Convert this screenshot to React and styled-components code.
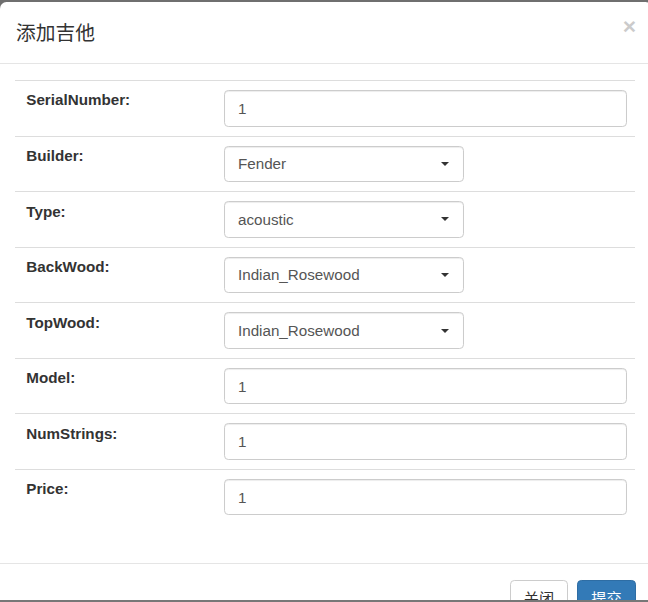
import React from "react";
import styled, { createGlobalStyle } from "styled-components";

const Global = createGlobalStyle`
  html, body { margin: 0; padding: 0; background: #6f6f6f; }
  body { font-family: "Liberation Sans", Arial, "Noto Sans CJK SC", sans-serif; color: #333; }
  * { box-sizing: border-box; }
`;

const Page = styled.div`
  width: 648px;
  height: 602px;
  display: flex;
  flex-direction: column;
  overflow: hidden;
  background: #6f6f6f;
`;

const Bar = styled.div`
  height: 2px;
  flex: none;
  background: ${(p) => p.$color || "#6f6f6f"};
`;

const Viewport = styled.div`
  flex: 1;
  overflow: hidden;
`;

const Modal = styled.div`
  width: 652px;
  background: #fff;
  border-radius: 6.5px 6.5px 0 0;
  display: flex;
  flex-direction: column;
`;

const Header = styled.div`
  display: flex;
  justify-content: space-between;
  align-items: flex-start;
  padding: 16.35px 16px 16.35px 16px;
  border-bottom: 1px solid #e5e5e5;
`;

const Title = styled.h4`
  margin: 0;
  font-family: "Noto Sans CJK SC", "Liberation Sans", sans-serif;
  font-weight: 400;
  font-size: 19.8px;
  line-height: 28.3px;
  color: #333;
`;

const Close = styled.button`
  border: 0;
  background: transparent;
  padding: 0;
  margin-top: -3px;
  font-family: "Liberation Sans", Arial, sans-serif;
  font-size: 22.9px;
  font-weight: 700;
  line-height: 1;
  color: #000;
  opacity: 0.2;
  text-shadow: 0 1px 0 #fff;
`;

const Body = styled.div`
  padding: 16px 16.7px 16.35px 15.3px;
`;

const Table = styled.div`
  display: flex;
  flex-direction: column;
  margin-bottom: 21.8px;
`;

const Row = styled.div`
  display: grid;
  grid-template-columns: 200px 1fr;
  border-top: 1px solid #ddd;
`;

const LabelCell = styled.div`
  padding: 8.5px 8.7px 0 11px;
  font-weight: 700;
  font-size: 15.2px;
  line-height: 21.8px;
  color: #333;
`;

const FieldCell = styled.div`
  padding: 9px 8.5px 9px 8.7px;
`;

const Input = styled.div`
  height: 36.57px;
  width: ${(p) => (p.$narrow ? "240px" : "100%")};
  border: 1px solid #ccc;
  border-radius: 4.3px;
  box-shadow: inset 0 1px 1px rgba(0, 0, 0, 0.075);
  padding: 0 13px;
  display: flex;
  align-items: center;
  justify-content: space-between;
  font-size: 15.2px;
  color: #555;
  background: #fff;
`;

const Caret = styled.span`
  width: 0;
  height: 0;
  border-left: 4.5px solid transparent;
  border-right: 4.5px solid transparent;
  border-top: 4.5px solid #333;
  margin-right: 1px;
`;

const Footer = styled.div`
  display: flex;
  justify-content: flex-end;
  gap: 9px;
  padding: 16.35px 16.4px;
  border-top: 1px solid #e5e5e5;
`;

const Button = styled.button`
  height: 36.6px;
  padding: 6.5px 13px;
  font-family: "Noto Sans CJK SC", "Liberation Sans", sans-serif;
  font-size: 15.2px;
  line-height: 21.8px;
  border-radius: 4.3px;
  border: 1px solid ${(p) => (p.$primary ? "#2e6da4" : "#ccc")};
  background: ${(p) => (p.$primary ? "#337ab7" : "#fff")};
  color: ${(p) => (p.$primary ? "#fff" : "#333")};
`;

const fields = [
  { label: "SerialNumber:", value: "1" },
  { label: "Builder:", value: "Fender", select: true },
  { label: "Type:", value: "acoustic", select: true },
  { label: "BackWood:", value: "Indian_Rosewood", select: true },
  { label: "TopWood:", value: "Indian_Rosewood", select: true },
  { label: "Model:", value: "1" },
  { label: "NumStrings:", value: "1" },
  { label: "Price:", value: "1" },
];

export default function App() {
  return (
    <>
      <Global />
      <Page>
        <Bar />
        <Viewport>
          <Modal>
            <Header>
              <Title>添加吉他</Title>
              <Close>×</Close>
            </Header>
            <Body>
              <Table>
                {fields.map((f) => (
                  <Row key={f.label}>
                    <LabelCell>{f.label}</LabelCell>
                    <FieldCell>
                      <Input $narrow={f.select}>
                        <span>{f.value}</span>
                        {f.select && <Caret />}
                      </Input>
                    </FieldCell>
                  </Row>
                ))}
              </Table>
            </Body>
            <Footer>
              <Button>关闭</Button>
              <Button $primary>提交</Button>
            </Footer>
          </Modal>
        </Viewport>
        <Bar $color="#777" />
      </Page>
    </>
  );
}
